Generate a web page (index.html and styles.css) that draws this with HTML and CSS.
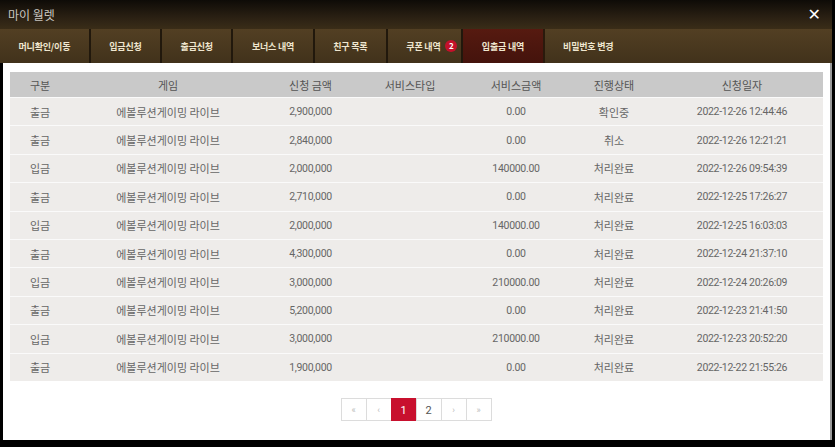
FILE: index.html
```html
<!DOCTYPE html>
<html>
<head>
<meta charset="utf-8">
<title>마이 월렛</title>
<link rel="stylesheet" href="styles.css">
</head>
<body>
<div id="wallet">
	<div class="wallet-head">
		<span class="wallet-title">마이 월렛</span>
		<span class="wallet-close">✕</span>
	</div>

	<div class="tabs">
		<div class="tab">머니확인/이동</div>
		<div class="tab">입금신청</div>
		<div class="tab">출금신청</div>
		<div class="tab">보너스 내역</div>
		<div class="tab">친구 목록</div>
		<div class="tab tab-coupon">쿠폰 내역 <span class="badge">2</span></div>
		<div class="tab active">입출금 내역</div>
		<div class="tab last">비밀번호 변경</div>
	</div>

	<div class="wallet-body">
		<table class="history">
			<tr>
				<th class="c-type">구분</th>
				<th class="c-game">게임</th>
				<th class="c-amount">신청 금액</th>
				<th class="c-stype">서비스타입</th>
				<th class="c-samount">서비스금액</th>
				<th class="c-state">진행상태</th>
				<th class="c-date">신청일자</th>
			</tr>
			<tr><td>출금</td><td>에볼루션게이밍 라이브</td><td class="num">2,900,000</td><td></td><td class="num">0.00</td><td>확인중</td><td class="num">2022-12-26 12:44:46</td></tr>
			<tr><td>출금</td><td>에볼루션게이밍 라이브</td><td class="num">2,840,000</td><td></td><td class="num">0.00</td><td>취소</td><td class="num">2022-12-26 12:21:21</td></tr>
			<tr><td>입금</td><td>에볼루션게이밍 라이브</td><td class="num">2,000,000</td><td></td><td class="num">140000.00</td><td>처리완료</td><td class="num">2022-12-26 09:54:39</td></tr>
			<tr><td>출금</td><td>에볼루션게이밍 라이브</td><td class="num">2,710,000</td><td></td><td class="num">0.00</td><td>처리완료</td><td class="num">2022-12-25 17:26:27</td></tr>
			<tr><td>입금</td><td>에볼루션게이밍 라이브</td><td class="num">2,000,000</td><td></td><td class="num">140000.00</td><td>처리완료</td><td class="num">2022-12-25 16:03:03</td></tr>
			<tr><td>출금</td><td>에볼루션게이밍 라이브</td><td class="num">4,300,000</td><td></td><td class="num">0.00</td><td>처리완료</td><td class="num">2022-12-24 21:37:10</td></tr>
			<tr><td>입금</td><td>에볼루션게이밍 라이브</td><td class="num">3,000,000</td><td></td><td class="num">210000.00</td><td>처리완료</td><td class="num">2022-12-24 20:26:09</td></tr>
			<tr><td>출금</td><td>에볼루션게이밍 라이브</td><td class="num">5,200,000</td><td></td><td class="num">0.00</td><td>처리완료</td><td class="num">2022-12-23 21:41:50</td></tr>
			<tr><td>입금</td><td>에볼루션게이밍 라이브</td><td class="num">3,000,000</td><td></td><td class="num">210000.00</td><td>처리완료</td><td class="num">2022-12-23 20:52:20</td></tr>
			<tr><td>출금</td><td>에볼루션게이밍 라이브</td><td class="num">1,900,000</td><td></td><td class="num">0.00</td><td>처리완료</td><td class="num">2022-12-22 21:55:26</td></tr>
		</table>

		<div class="pager">
			<a class="pg arrow">«</a>
			<a class="pg arrow">‹</a>
			<a class="pg current">1</a>
			<a class="pg">2</a>
			<a class="pg arrow">›</a>
			<a class="pg arrow">»</a>
		</div>
	</div>
</div>
</body>
</html>
```

FILE: styles.css
```css
body {
	margin: 0;
	background-color: #000;
	font-family: "Noto Sans CJK KR", "Noto Sans", sans-serif;
	font-size: 11px;
	color: #666;
}

#wallet {
	width: 832px;
	height: 440px;
	display: flex;
	flex-direction: column;
}

/* 상단 제목줄 */
.wallet-head {
	height: 29px;
	display: flex;
	align-items: center;
	justify-content: space-between;
	padding: 0 11px 0 8px;
	background: linear-gradient(#0e0b07, #2a2013 60%, #3a2d18);
}
.wallet-title {
	color: #c9c6c0;
	font-size: 12px;
}
.wallet-close {
	color: #fff;
	font-size: 16px;
	font-weight: bold;
	font-family: "DejaVu Sans", sans-serif;
}

/* 탭 */
.tabs {
	height: 34px;
	display: flex;
	background: linear-gradient(#523f23, #41321b);
}
.tab {
	display: flex;
	align-items: center;
	padding: 0 18.5px;
	border-right: 2px solid #21180c;
	color: #efe6cf;
	font-size: 9px;
	font-weight: bold;
	letter-spacing: -0.2px;
	white-space: pre;
}
.tab.tab-coupon {padding-right: 4px;}
.tab.active {
	background: linear-gradient(#561a10, #44130c);
	border-right-color: #2a1a0c;
}
.tab.last {border-right: none;}
.badge {
	display: inline-block;
	width: 12px;
	height: 12px;
	line-height: 12px;
	margin-left: 3px;
	border-radius: 50%;
	background-color: #c4102a;
	color: #fff;
	font-size: 8px;
	text-align: center;
}

/* 본문 */
.wallet-body {
	flex: 1;
	background-color: #fff;
	border-left: 3px solid #000;
	border-right: 2px solid #9a9a9a;
	padding: 9px 7px 0 7px;
}

.history {
	width: 100%;
	border-collapse: collapse;
	text-align: center;
}
.history th {
	height: 25px;
	padding: 0;
	background-color: #c9c9c9;
	color: #555;
	font-weight: normal;
	font-size: 11px;
}
.history td {
	height: 27.4px;
	padding: 0;
	background-color: #eeecea;
	border-top: 1px solid #fafafa;
	color: #666;
}
.history .num {
	font-family: "Roboto", sans-serif;
	font-size: 10.5px;
	letter-spacing: -0.3px;
}
.c-type {width: 60px;}
.c-game {width: 196px;}
.c-amount {width: 89px;}
.c-stype {width: 110px;}
.c-samount {width: 102px;}
.c-state {width: 94px;}

/* 페이지 */
.pager {
	display: flex;
	justify-content: center;
	margin-top: 17px;
}
.pg {
	width: 26px;
	height: 23px;
	line-height: 23px;
	margin-left: -1px;
	border: 1px solid #dcdcdc;
	box-sizing: border-box;
	text-align: center;
	color: #555;
	font-family: "Roboto", sans-serif;
	font-size: 11px;
}
.pg.arrow {color: #bbb; font-size: 9px;}
.pg.current {
	background-color: #c8102e;
	border-color: #c8102e;
	color: #fff;
}
```
